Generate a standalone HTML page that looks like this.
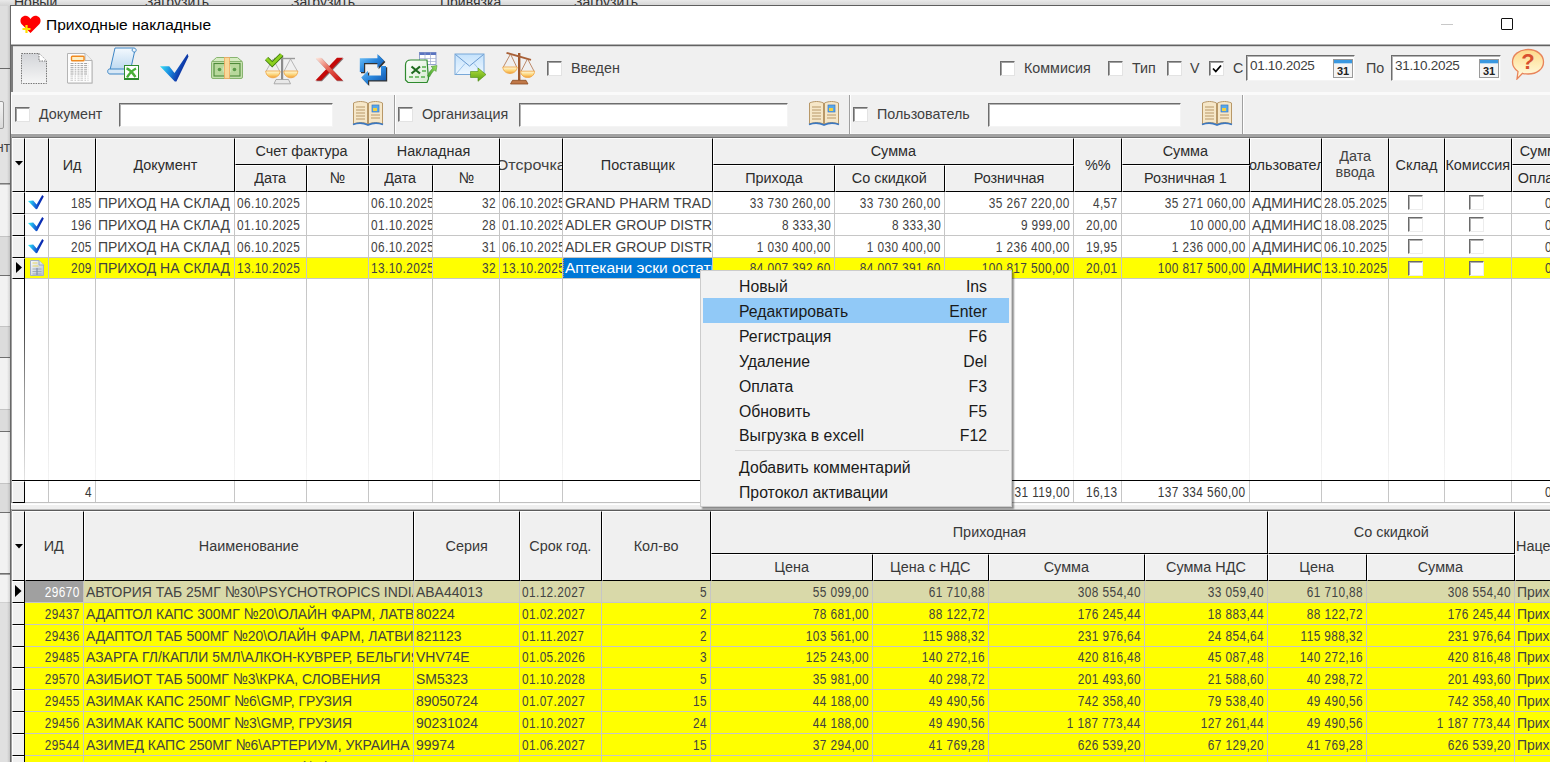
<!DOCTYPE html><html><head><meta charset="utf-8"><title>Приходные накладные</title><style>
html,body{margin:0;padding:0;width:1550px;height:762px;overflow:hidden;background:#e3e3e3;font-family:"Liberation Sans",sans-serif;position:relative}
.cell{position:absolute;overflow:hidden;white-space:nowrap;box-sizing:border-box;font-size:15.5px;color:#424242}
.cell span{display:inline-block;vertical-align:top}
.t.l{transform:scaleX(.9);transform-origin:0 50%}
.t.r{transform:scaleX(.9);transform-origin:100% 50%}
.t.c{transform:scaleX(.9);transform-origin:50% 50%}
.h.c{transform:scaleX(.93);transform-origin:50% 50%}
.h.l{transform:scaleX(.93);transform-origin:0 50%}
.hw.c{transform:scaleX(1.04);transform-origin:50% 50%}
.n.l{font-size:15.2px;letter-spacing:.5px;transform:scaleX(.78);transform-origin:0 50%}
.n.r{font-size:15.2px;letter-spacing:.5px;transform:scaleX(.78);transform-origin:100% 50%}
.n.c{font-size:15.2px;letter-spacing:.5px;transform:scaleX(.78);transform-origin:50% 50%}
.hb{position:absolute;box-sizing:border-box;background:#f0f0f0;border-top:1px solid #fff;border-left:1px solid #fff;border-right:1px solid #000;border-bottom:1px solid #000}
.ab{position:absolute}
.lbl{position:absolute;white-space:nowrap;font-size:14px;color:#404040;line-height:16px}
.cb{position:absolute;width:15px;height:15px;box-sizing:border-box;background:#fff;border-top:1px solid #6d6d6d;border-left:1px solid #6d6d6d;border-right:1px solid #e3e3e3;border-bottom:1px solid #e3e3e3;box-shadow:inset 1px 1px 0 #a0a0a0}
.gcb{position:absolute;width:15px;height:15px;box-sizing:border-box;background:#fff;border-top:1px solid #6a6a6a;border-left:1px solid #6a6a6a;border-right:1px solid #ececec;border-bottom:1px solid #ececec;box-shadow:inset 1px 1px 0 #b0b0b0}
.inp{position:absolute;box-sizing:border-box;background:#fff;border-top:1px solid #6d6d6d;border-left:1px solid #6d6d6d;border-right:1px solid #f4f4f4;border-bottom:1px solid #f4f4f4;box-shadow:inset 1px 1px 0 #b4b4b4}
.mi{position:absolute;left:38px;white-space:nowrap;font-size:15.8px;color:#1a1a1a;line-height:25px;height:25px}
.ms{position:absolute;right:24px;white-space:nowrap;font-size:15.8px;color:#1a1a1a;line-height:25px;height:25px;text-align:right}
</style></head><body>
<div style="position:absolute;left:0px;top:0px;width:1550px;height:6px;background:linear-gradient(#e9e9e9,#d3d3d3);overflow:hidden"><div class="lbl" style="left:14px;top:-6px;font-size:14px;color:#333">Новый</div><div class="lbl" style="left:145px;top:-6px;font-size:14px;color:#333">Загрузить</div><div class="lbl" style="left:291px;top:-6px;font-size:14px;color:#333">Загрузить</div><div class="lbl" style="left:440px;top:-6px;font-size:14px;color:#333">Привязка</div><div class="lbl" style="left:574px;top:-6px;font-size:14px;color:#333">Загрузить</div></div>
<div style="position:absolute;left:0px;top:6px;width:10px;height:63px;background:#dedede"></div>
<div style="position:absolute;left:0px;top:69px;width:10px;height:115px;background:#e2e2e2"></div>
<div style="position:absolute;left:0px;top:185px;width:10px;height:52px;background:#f2f2f2"></div>
<div style="position:absolute;left:0px;top:237px;width:10px;height:39px;background:#dcdcdc"></div>
<div style="position:absolute;left:0px;top:276px;width:10px;height:51px;background:#f2f2f2"></div>
<div style="position:absolute;left:0px;top:327px;width:10px;height:31px;background:#dcdcdc"></div>
<div style="position:absolute;left:0px;top:358px;width:10px;height:52px;background:#f2f2f2"></div>
<div style="position:absolute;left:0px;top:410px;width:10px;height:22px;background:#dcdcdc"></div>
<div style="position:absolute;left:0px;top:432px;width:10px;height:52px;background:#f2f2f2"></div>
<div style="position:absolute;left:0px;top:484px;width:10px;height:29px;background:#dcdcdc"></div>
<div style="position:absolute;left:0px;top:513px;width:10px;height:61px;background:#f2f2f2"></div>
<div style="position:absolute;left:0px;top:575px;width:10px;height:28px;background:#f2f2f2"></div>
<div style="position:absolute;left:0px;top:603px;width:10px;height:160px;background:#e0e0e0"></div>
<div style="position:absolute;left:0px;top:68px;width:10px;height:1px;background:#6a6a6a"></div>
<div style="position:absolute;left:0px;top:183px;width:10px;height:1px;background:#7a7a7a"></div>
<div style="position:absolute;left:0px;top:184px;width:10px;height:1px;background:#b0b0b0"></div>
<div style="position:absolute;left:0px;top:236px;width:10px;height:1px;background:#c4c4c4"></div>
<div style="position:absolute;left:0px;top:275px;width:10px;height:1px;background:#707070"></div>
<div style="position:absolute;left:0px;top:326px;width:10px;height:1px;background:#c4c4c4"></div>
<div style="position:absolute;left:0px;top:357px;width:10px;height:1px;background:#707070"></div>
<div style="position:absolute;left:0px;top:409px;width:10px;height:1px;background:#c4c4c4"></div>
<div style="position:absolute;left:0px;top:431px;width:10px;height:1px;background:#707070"></div>
<div style="position:absolute;left:0px;top:483px;width:10px;height:1px;background:#c4c4c4"></div>
<div style="position:absolute;left:0px;top:512px;width:10px;height:1px;background:#707070"></div>
<div style="position:absolute;left:0px;top:573px;width:10px;height:1px;background:#707070"></div>
<div style="position:absolute;left:0px;top:574px;width:10px;height:1px;background:#a0a0a0"></div>
<div style="position:absolute;left:0px;top:602px;width:10px;height:1px;background:#d0d0d0"></div>
<div style="position:absolute;left:7px;top:6px;width:3px;height:756px;background:linear-gradient(to right,rgba(0,0,0,0),rgba(0,0,0,.12))"></div>
<div style="position:absolute;left:-6px;top:101px;width:10px;height:28px;box-sizing:border-box;border:1px solid #9a9a9a;border-radius:2px;background:linear-gradient(#f4f4f4,#dadada)"></div>
<div class="lbl" style="left:-4px;top:139px;color:#444">нт</div>
<div style="position:absolute;left:10px;top:5px;width:1540px;height:757px;background:#fff;border-left:1px solid #686868;border-top:1px solid #5e5e5e;box-sizing:border-box"></div>
<div class="lbl" style="left:46px;top:16px;font-size:15.5px;color:#000;line-height:18px">Приходные накладные</div>
<div style="position:absolute;left:1441px;top:24px;width:12px;height:1px;background:#c8c8c8"></div>
<div style="position:absolute;left:1501px;top:18px;width:12px;height:12px;box-sizing:border-box;border:1px solid #111;border-radius:1px"></div>
<div style="position:absolute;left:11px;top:44px;width:1539px;height:1px;background:#b4b4b4"></div>
<div style="position:absolute;left:11px;top:45px;width:1539px;height:1px;background:#626262"></div>
<div style="position:absolute;left:11px;top:46px;width:1539px;height:46px;background:#f0f0f0"></div>
<div style="position:absolute;left:11px;top:46px;width:1539px;height:1px;background:#d2d2d2"></div>
<div style="position:absolute;left:11px;top:46px;width:2px;height:46px;background:#7c7c7c"></div>
<div style="position:absolute;left:11px;top:92px;width:1539px;height:3px;background:#fafafa"></div>
<div style="position:absolute;left:11px;top:95px;width:1539px;height:39px;background:#f0f0f0"></div>
<div style="position:absolute;left:11px;top:95px;width:1px;height:39px;background:#ffffff"></div>
<div style="position:absolute;left:11px;top:133px;width:1539px;height:1px;background:#f6f6f6"></div>
<div style="position:absolute;left:11px;top:134px;width:1539px;height:3px;background:#a2a2a2"></div>
<div style="position:absolute;left:11px;top:137px;width:1539px;height:1px;background:#737373"></div>
<svg style="position:absolute;left:20px;top:15px" width="21" height="19" viewBox="0 0 21 19"><path d="M10.5 18 L2 9.5 C-0.5 7 0 2.5 3.5 1.2 C6.5 0 9 1.5 10.5 4 C12 1.5 14.5 0 17.5 1.2 C21 2.5 21.5 7 19 9.5 Z" fill="#f00"/><path d="M6.5 10v8M2.5 14h8" stroke="#ffe000" stroke-width="2.2"/></svg>
<svg style="position:absolute;left:20px;top:52px" width="28" height="33" viewBox="0 0 28 33"><defs><linearGradient id="g1" x1="0" y1="0" x2="0" y2="1"><stop offset="0" stop-color="#d2d4d8"/><stop offset="1" stop-color="#f6f6f6"/></linearGradient></defs><path d="M1.5 1.5 H19 L26.5 9 V31.5 H1.5 Z" fill="url(#g1)" stroke="#777" stroke-dasharray="1.5 1" stroke-width="1"/><path d="M19 1.5 V9 H26.5" fill="#fff" stroke="#777" stroke-dasharray="1.5 1"/></svg>
<svg style="position:absolute;left:66px;top:52px" width="28" height="33" viewBox="0 0 28 33"><path d="M2 2.5 H20 L27 9.5 V32 H2 Z" fill="#c8c8c8" opacity=".6"/><path d="M1.5 1.5 H19 L26 8.5 V31 H1.5 Z" fill="#fcfcfc" stroke="#b4b4b4" stroke-width="1"/><path d="M19 1.5 V8.5 H26" fill="#f0f0f0" stroke="#b4b4b4"/><rect x="5.5" y="4.2" width="12.5" height="4.6" rx=".8" fill="#fdf0c8" stroke="#f08a20" stroke-width="1.4"/><g stroke="#9a9a9a" stroke-width=".9" stroke-dasharray="3 1.2 1.6 1.2 2 1 2.6 1"><path d="M4.5 11.5h18M4.5 13.6h18M4.5 15.7h18M4.5 17.8h18M4.5 19.9h18M4.5 22h18"/></g><g stroke="#c4c4c4" stroke-width=".9" stroke-dasharray="2.5 1.5 1.5 1.5 2 1"><path d="M4.5 24.1h18M4.5 26.2h18M4.5 28.3h18"/></g></svg>
<svg style="position:absolute;left:106px;top:47px" width="34" height="34" viewBox="0 0 34 34"><defs><linearGradient id="g3" x1="0" y1="0" x2="0" y2="1"><stop offset="0" stop-color="#f4f9fe"/><stop offset="1" stop-color="#bcd8f0"/></linearGradient></defs><path d="M9 1 H28 C30.5 1 31 5 28.5 5 L24.5 23 H4 Z" fill="url(#g3)" stroke="#3d86c6" stroke-width="1"/><path d="M27 1.5 C25.5 2.5 26 5 28.5 5" fill="none" stroke="#3d86c6" stroke-width="1"/><path d="M3.5 22 H23 C21.5 23.5 22 27 24 27 H4 C1 27 1 22 3.5 22Z" fill="#d8e8f6" stroke="#3d86c6" stroke-width="1"/><rect x="18.5" y="18.5" width="14" height="14" fill="#fff" stroke="#2e8a2e" stroke-width="1"/><path d="M20.5 21.5 C23 22 26 25 29.5 30 M30 21.5 C27 23 23 27 21 30.5" fill="none" stroke="#48b038" stroke-width="2.4"/><path d="M19 31.5h13" stroke="#2e8a2e" stroke-width="1"/></svg>
<svg style="position:absolute;left:158px;top:53px" width="32" height="30" viewBox="0 0 32 30"><defs><linearGradient id="g4" x1="0" y1=".3" x2="1" y2=".7"><stop offset="0" stop-color="#3ef0fa"/><stop offset=".4" stop-color="#1a8ee0"/><stop offset=".7" stop-color="#1040b0"/><stop offset="1" stop-color="#08207a"/></linearGradient></defs><path d="M2 13.3 L11.2 13.3 L16.5 20 L29.5 0.7 L30.5 3.6 L18.4 28.5 L16.8 28.5 Z" fill="url(#g4)"/></svg>
<svg style="position:absolute;left:210px;top:56px" width="34" height="24" viewBox="0 0 34 24"><rect x="1.5" y="5" width="31" height="17.5" rx="1.5" fill="#c4e0ac" stroke="#88b470" stroke-width="1"/><path d="M2 5.5 L6.5 1.5 H27.5 L32 5.5Z" fill="#d6ecc2" stroke="#88b470" stroke-width="1"/><rect x="4" y="7.5" width="26" height="12.5" fill="#b8d89c" stroke="#4e8a3a" stroke-width="1.1"/><circle cx="9.5" cy="13.5" r="1.8" fill="#5a9a48"/><circle cx="24.5" cy="13.5" r="1.8" fill="#5a9a48"/><ellipse cx="17" cy="13.5" rx="4.5" ry="4.5" fill="#cde6b6"/><rect x="14.5" y="1.5" width="5" height="21" fill="#f8d898" stroke="#f0a860" stroke-width=".8"/></svg>
<svg style="position:absolute;left:263px;top:51px" width="38" height="35" viewBox="263 51 38 35"><defs><linearGradient id="gp" x1="0" y1="0" x2="0" y2="1"><stop offset="0" stop-color="#fffbe0"/><stop offset=".55" stop-color="#fcd478"/><stop offset="1" stop-color="#f2a03a"/></linearGradient></defs><rect x="281" y="55" width="2.2" height="25" fill="#8c8c8c"/><path d="M274 58.5 H295" stroke="#9a9a9a" stroke-width="1.4"/><path d="M273 59 L266.2 71 M273 59 L279.6 71 M290.5 59 L284.2 71 M290.5 59 L297.3 71" stroke="#a8a8a8" stroke-width=".8"/><path d="M265.7 71 H280.1 C279.6 80 266.2 80 265.7 71Z" fill="url(#gp)" stroke="#f0a848" stroke-width=".9"/><path d="M283.8 71 H297.8 C297.3 80 284.3 80 283.8 71Z" fill="url(#gp)" stroke="#f0a848" stroke-width=".9"/><path d="M276 79.5 H288.5 L290.5 83.8 H274 Z" fill="#e8e8e8" stroke="#9c9c9c" stroke-width=".8"/><path d="M266.6 58.6 L272.2 64.2 L281.6 54.8" fill="none" stroke="#3e7a0e" stroke-width="4.6"/><path d="M266.6 58.6 L272.2 64.2 L281.6 54.8" fill="none" stroke="#8cd020" stroke-width="3"/></svg>
<svg style="position:absolute;left:312px;top:55px" width="34" height="28" viewBox="312 55 34 28"><defs><linearGradient id="g7" x1="0" y1="0" x2="1" y2="1"><stop offset="0" stop-color="#fff0e6"/><stop offset=".45" stop-color="#e86a5a"/><stop offset="1" stop-color="#c80a0a"/></linearGradient></defs><path d="M337.8 58.5 H343.8 L322 81.2 H316.2 Z" fill="#2a0a0a" opacity=".55"/><path d="M337 57.7 H343 L321.2 80.4 H315.4 Z" fill="#c40808"/><path d="M316 58.5 H322 L343.6 81.2 H337.4 Z" fill="#3a0a0a" opacity=".5"/><path d="M315.2 57.7 H321.2 L342.8 80.4 H336.6 Z" fill="url(#g7)"/></svg>
<svg style="position:absolute;left:357px;top:52px" width="32" height="35" viewBox="357 52 32 35"><defs><linearGradient id="g8" x1="0" y1="0" x2="1" y2="1"><stop offset="0" stop-color="#7cccfc"/><stop offset=".5" stop-color="#2a86dc"/><stop offset="1" stop-color="#0a4ca4"/></linearGradient></defs><g transform="translate(1.2,1.2)" fill="#111" opacity=".85"><path d="M359.8 72 V58.2 H377.4 V54.1 L384.2 60.8 L377.4 68.1 V63 H364 V72 Z"/><path d="M386 66 V80.3 H368 V84.8 L361.2 77.5 L368 70.8 V75.5 H381 V66 Z"/></g><path d="M359.8 72 V58.2 H377.4 V54.1 L384.2 60.8 L377.4 68.1 V63 H364 V72 Z" fill="url(#g8)"/><path d="M386 66 V80.3 H368 V84.8 L361.2 77.5 L368 70.8 V75.5 H381 V66 Z" fill="url(#g8)"/></svg>
<svg style="position:absolute;left:402px;top:50px" width="37" height="35" viewBox="402 50 37 35"><defs><linearGradient id="g9" x1="0" y1="0" x2="1" y2="1"><stop offset="0" stop-color="#ffffff"/><stop offset="1" stop-color="#d6ead0"/></linearGradient><linearGradient id="g9a" x1="0" y1="1" x2="1" y2="0"><stop offset="0" stop-color="#3a9a2a"/><stop offset="1" stop-color="#9ee060"/></linearGradient></defs><rect x="419.5" y="52.5" width="16.5" height="12" fill="#fff" stroke="#7a8cc0" stroke-width=".8"/><rect x="419.5" y="52.5" width="16.5" height="2.5" fill="#5a74c0"/><path d="M419.5 58.5h16.5M419.5 61.5h16.5M425 52.5v12M430.5 52.5v12" stroke="#a0acd0" stroke-width=".7"/><path d="M405.5 65 C405.5 61.5 408 60 411 60 H427 L428.5 79 L427 82.5 H408 L405.5 80 Z" fill="url(#g9)" stroke="#2e8a2e" stroke-width="1.2"/><path d="M411.5 66.5 L420 73.5 M420 66.5 L411.5 73.5" stroke="#1e6a1e" stroke-width="2.2"/><path d="M422 67h4M422 71h4M409 77h4M415 77h4M421 77h4" stroke="#78c070" stroke-width="2"/><path d="M427.5 76 C429 72 431 70 433 68 L431 66.5 L437 65.5 L436 71.5 L434.5 70 C432.5 72 431 74 429.5 77 Z" fill="url(#g9a)" stroke="#3a8a2a" stroke-width=".5"/></svg>
<svg style="position:absolute;left:453px;top:52px" width="35" height="31" viewBox="453 52 35 31"><defs><linearGradient id="g10" x1="0" y1="0" x2="0" y2="1"><stop offset="0" stop-color="#c4e2fc"/><stop offset="1" stop-color="#eef7ff"/></linearGradient><linearGradient id="g10a" x1="0" y1="0" x2="0" y2="1"><stop offset="0" stop-color="#b4e040"/><stop offset="1" stop-color="#5aa010"/></linearGradient></defs><rect x="455" y="54" width="29" height="20.5" fill="url(#g10)" stroke="#78a8d8" stroke-width="1"/><path d="M455.5 54.5 L469.5 66 L483.5 54.5" fill="none" stroke="#6a9ad0" stroke-width="1"/><path d="M456 74 L465 63.5 M483 74 L474 63.5" stroke="#8ab8e4" stroke-width=".8"/><path d="M470.5 71.5 H478 V68 L486 74.5 L478 81.3 V77.5 H470.5 Z" fill="url(#g10a)" stroke="#4a8a10" stroke-width=".6"/></svg>
<svg style="position:absolute;left:501px;top:51px" width="36" height="35" viewBox="501 51 36 35"><defs><linearGradient id="gq" x1="0" y1="0" x2="0" y2="1"><stop offset="0" stop-color="#fffbe0"/><stop offset=".55" stop-color="#fcd478"/><stop offset="1" stop-color="#f2a03a"/></linearGradient></defs><rect x="518" y="53" width="2.4" height="27.5" fill="#a05a30"/><path d="M506.5 52.8 L531 59.8" stroke="#a86038" stroke-width="1.8"/><path d="M510.5 54 L503.2 67.2 M510.5 54 L516.8 67.2 M527.5 58.8 L521 71.4 M527.5 58.8 L534.2 71.4" stroke="#b07048" stroke-width=".8"/><path d="M502.8 67 H517.2 C516.7 75.6 503.3 75.6 502.8 67Z" fill="url(#gq)" stroke="#f0a848" stroke-width=".9"/><path d="M520.6 71.2 H534.6 C534.1 79.6 521.1 79.6 520.6 71.2Z" fill="url(#gq)" stroke="#f0a848" stroke-width=".9"/><path d="M512.5 80.3 H526 L528 84 H510.5 Z" fill="#c07848" stroke="#8a4a20" stroke-width=".8"/></svg>
<div class="cb" style="left:547px;top:61px"></div>
<div class="lbl" style="left:571px;top:60px;font-size:14.3px">Введен</div>
<div class="cb" style="left:1000px;top:61px"></div>
<div class="lbl" style="left:1024px;top:60px;font-size:14.3px">Коммисия</div>
<div class="cb" style="left:1108px;top:61px"></div>
<div class="lbl" style="left:1132px;top:60px;font-size:14.3px">Тип</div>
<div class="cb" style="left:1167px;top:61px"></div>
<div class="lbl" style="left:1190px;top:60px;font-size:14.3px">V</div>
<div class="cb" style="left:1209px;top:61px"></div>
<svg style="position:absolute;left:1212px;top:64px" width="10" height="9" viewBox="0 0 10 9"><path d="M1 4.5 L3.8 7.5 L9 1.5" fill="none" stroke="#000" stroke-width="1.8"/></svg>
<div class="lbl" style="left:1233px;top:60px;font-size:14.3px">С</div>
<div class="inp" style="left:1246px;top:55px;width:109px;height:26px"></div><div class="lbl" style="left:1250px;top:58px;font-size:13.5px;letter-spacing:-0.3px">01.10.2025</div><svg style="position:absolute;left:1333px;top:59px" width="20" height="19" viewBox="0 0 20 19"><rect x="0.5" y="0.5" width="19" height="18" fill="#f4f4f4" stroke="#9a9a9a"/><rect x="1" y="1" width="18" height="3" fill="#3a98e0"/><rect x="1" y="4" width="18" height="1" fill="#b8d8f0"/><text x="10" y="16" font-family="Liberation Sans" font-weight="bold" font-size="11" text-anchor="middle" fill="#222">31</text></svg>
<div class="lbl" style="left:1366px;top:60px;font-size:14.3px">По</div>
<div class="inp" style="left:1391px;top:55px;width:110px;height:26px"></div><div class="lbl" style="left:1395px;top:58px;font-size:13.5px;letter-spacing:-0.3px">31.10.2025</div><svg style="position:absolute;left:1479px;top:59px" width="20" height="19" viewBox="0 0 20 19"><rect x="0.5" y="0.5" width="19" height="18" fill="#f4f4f4" stroke="#9a9a9a"/><rect x="1" y="1" width="18" height="3" fill="#3a98e0"/><rect x="1" y="4" width="18" height="1" fill="#b8d8f0"/><text x="10" y="16" font-family="Liberation Sans" font-weight="bold" font-size="11" text-anchor="middle" fill="#222">31</text></svg>
<svg style="position:absolute;left:1511px;top:48px" width="34" height="32" viewBox="0 0 34 32"><defs><linearGradient id="gh" x1="0" y1="0" x2="0" y2="1"><stop offset="0" stop-color="#fdd888"/><stop offset=".6" stop-color="#fff0c0"/><stop offset="1" stop-color="#fffbe8"/></linearGradient></defs><path d="M17 1.5 C26 1.5 32.5 7 32.5 14 C32.5 21 26 26 17 26 C15 26 13 25.8 11.5 25.3 L6 31 L7 23.5 C3.5 21 1.5 17.8 1.5 14 C1.5 7 8 1.5 17 1.5Z" fill="url(#gh)" stroke="#e8845a" stroke-width="1.3"/><text x="17" y="21" font-family="Liberation Sans" font-weight="bold" font-size="22" text-anchor="middle" fill="#d8502e">?</text></svg>
<div class="cb" style="left:15px;top:107px"></div>
<div class="lbl" style="left:39px;top:106px;font-size:14.3px">Документ</div>
<div class="inp" style="left:119px;top:103px;width:214px;height:24px"></div>
<svg style="position:absolute;left:352px;top:99px" width="32" height="27" viewBox="0 0 32 27"><path d="M1.5 4 C6 2 11 2 15.5 4 V25 C11 23 6 23 1.5 25 Z" fill="#f6e7c8" stroke="#b89868" stroke-width="1"/><path d="M16.5 4 C21 2 26 2 30.5 4 V25 C26 23 21 23 16.5 25 Z" fill="#f6e7c8" stroke="#b89868" stroke-width="1"/><path d="M1 25.5 C6 23.5 11 23.5 16 26 C21 23.5 26 23.5 31 25.5" fill="none" stroke="#3c78c0" stroke-width="1.8"/><path d="M4 8h9M4 11h9M4 14h9M4 17h9M4 20h9M19 16h9M19 19h9" stroke="#b89868" stroke-width="1"/><rect x="20" y="6" width="7" height="7" fill="#58a8e8" stroke="#3c78c0" stroke-width=".7"/><rect x="21" y="9" width="4" height="3" fill="#f0d040"/></svg>
<div class="cb" style="left:398px;top:107px"></div>
<div class="lbl" style="left:422px;top:106px;font-size:14.3px">Организация</div>
<div class="inp" style="left:519px;top:103px;width:269px;height:24px"></div>
<svg style="position:absolute;left:808px;top:99px" width="32" height="27" viewBox="0 0 32 27"><path d="M1.5 4 C6 2 11 2 15.5 4 V25 C11 23 6 23 1.5 25 Z" fill="#f6e7c8" stroke="#b89868" stroke-width="1"/><path d="M16.5 4 C21 2 26 2 30.5 4 V25 C26 23 21 23 16.5 25 Z" fill="#f6e7c8" stroke="#b89868" stroke-width="1"/><path d="M1 25.5 C6 23.5 11 23.5 16 26 C21 23.5 26 23.5 31 25.5" fill="none" stroke="#3c78c0" stroke-width="1.8"/><path d="M4 8h9M4 11h9M4 14h9M4 17h9M4 20h9M19 16h9M19 19h9" stroke="#b89868" stroke-width="1"/><rect x="20" y="6" width="7" height="7" fill="#58a8e8" stroke="#3c78c0" stroke-width=".7"/><rect x="21" y="9" width="4" height="3" fill="#f0d040"/></svg>
<div class="cb" style="left:853px;top:107px"></div>
<div class="lbl" style="left:877px;top:106px;font-size:14.3px">Пользователь</div>
<div class="inp" style="left:988px;top:103px;width:193px;height:24px"></div>
<svg style="position:absolute;left:1201px;top:99px" width="32" height="27" viewBox="0 0 32 27"><path d="M1.5 4 C6 2 11 2 15.5 4 V25 C11 23 6 23 1.5 25 Z" fill="#f6e7c8" stroke="#b89868" stroke-width="1"/><path d="M16.5 4 C21 2 26 2 30.5 4 V25 C26 23 21 23 16.5 25 Z" fill="#f6e7c8" stroke="#b89868" stroke-width="1"/><path d="M1 25.5 C6 23.5 11 23.5 16 26 C21 23.5 26 23.5 31 25.5" fill="none" stroke="#3c78c0" stroke-width="1.8"/><path d="M4 8h9M4 11h9M4 14h9M4 17h9M4 20h9M19 16h9M19 19h9" stroke="#b89868" stroke-width="1"/><rect x="20" y="6" width="7" height="7" fill="#58a8e8" stroke="#3c78c0" stroke-width=".7"/><rect x="21" y="9" width="4" height="3" fill="#f0d040"/></svg>
<div style="position:absolute;left:394px;top:95px;width:1px;height:39px;background:#a0a0a0"></div>
<div style="position:absolute;left:395px;top:95px;width:1px;height:39px;background:#ffffff"></div>
<div style="position:absolute;left:849px;top:95px;width:1px;height:39px;background:#a0a0a0"></div>
<div style="position:absolute;left:850px;top:95px;width:1px;height:39px;background:#ffffff"></div>
<div style="position:absolute;left:1242px;top:95px;width:1px;height:39px;background:#a0a0a0"></div>
<div style="position:absolute;left:1243px;top:95px;width:1px;height:39px;background:#ffffff"></div>
<div style="position:absolute;left:12px;top:192px;width:1538px;height:310px;background:#fff"></div>
<div style="position:absolute;left:11px;top:136px;width:1px;height:367px;background:#a0a0a0"></div>
<div class="hb" style="left:12px;top:138px;width:13px;height:54px"></div>
<div class="hb" style="left:25px;top:138px;width:24px;height:54px"></div>
<div class="hb" style="left:49px;top:138px;width:47px;height:54px"></div><div class="cell" style="left:49px;top:138px;width:46px;height:53px;line-height:53px;display:flex;justify-content:center;color:#2c2c2c"><span class="h c">Ид</span></div>
<div class="hb" style="left:96px;top:138px;width:139px;height:54px"></div><div class="cell" style="left:96px;top:138px;width:138px;height:53px;line-height:53px;display:flex;justify-content:center;color:#2c2c2c"><span class="h c">Документ</span></div>
<div class="hb" style="left:235px;top:138px;width:134px;height:27px"></div><div class="cell" style="left:235px;top:138px;width:133px;height:26px;line-height:26px;display:flex;justify-content:center;color:#2c2c2c"><span class="h c">Счет фактура</span></div>
<div class="hb" style="left:235px;top:165px;width:72px;height:27px"></div><div class="cell" style="left:235px;top:165px;width:71px;height:26px;line-height:26px;display:flex;justify-content:center;color:#2c2c2c"><span class="h c">Дата</span></div>
<div class="hb" style="left:307px;top:165px;width:62px;height:27px"></div><div class="cell" style="left:307px;top:165px;width:61px;height:26px;line-height:26px;display:flex;justify-content:center;color:#2c2c2c"><span class="h c">№</span></div>
<div class="hb" style="left:369px;top:138px;width:131px;height:27px"></div><div class="cell" style="left:369px;top:138px;width:130px;height:26px;line-height:26px;display:flex;justify-content:center;color:#2c2c2c"><span class="h c">Накладная</span></div>
<div class="hb" style="left:369px;top:165px;width:64px;height:27px"></div><div class="cell" style="left:369px;top:165px;width:63px;height:26px;line-height:26px;display:flex;justify-content:center;color:#2c2c2c"><span class="h c">Дата</span></div>
<div class="hb" style="left:433px;top:165px;width:67px;height:27px"></div><div class="cell" style="left:433px;top:165px;width:66px;height:26px;line-height:26px;display:flex;justify-content:center;color:#2c2c2c"><span class="h c">№</span></div>
<div class="hb" style="left:500px;top:138px;width:63px;height:54px"></div><div class="cell" style="left:500px;top:138px;width:62px;height:53px;line-height:53px;display:flex;justify-content:center;"><span class="hw c">Отсрочка</span></div>
<div class="hb" style="left:563px;top:138px;width:150px;height:54px"></div><div class="cell" style="left:563px;top:138px;width:149px;height:53px;line-height:53px;display:flex;justify-content:center;color:#2c2c2c"><span class="h c">Поставщик</span></div>
<div class="hb" style="left:713px;top:138px;width:361px;height:27px"></div><div class="cell" style="left:713px;top:138px;width:360px;height:26px;line-height:26px;display:flex;justify-content:center;color:#2c2c2c"><span class="h c">Сумма</span></div>
<div class="hb" style="left:713px;top:165px;width:122px;height:27px"></div><div class="cell" style="left:713px;top:165px;width:121px;height:26px;line-height:26px;display:flex;justify-content:center;color:#2c2c2c"><span class="h c">Прихода</span></div>
<div class="hb" style="left:835px;top:165px;width:110px;height:27px"></div><div class="cell" style="left:835px;top:165px;width:109px;height:26px;line-height:26px;display:flex;justify-content:center;color:#2c2c2c"><span class="h c">Со скидкой</span></div>
<div class="hb" style="left:945px;top:165px;width:129px;height:27px"></div><div class="cell" style="left:945px;top:165px;width:128px;height:26px;line-height:26px;display:flex;justify-content:center;color:#2c2c2c"><span class="h c">Розничная</span></div>
<div class="hb" style="left:1074px;top:138px;width:48px;height:54px"></div><div class="cell" style="left:1074px;top:138px;width:47px;height:53px;line-height:53px;display:flex;justify-content:center;color:#2c2c2c"><span class="h c">%%</span></div>
<div class="hb" style="left:1122px;top:138px;width:128px;height:27px"></div><div class="cell" style="left:1122px;top:138px;width:127px;height:26px;line-height:26px;display:flex;justify-content:center;color:#2c2c2c"><span class="h c">Сумма</span></div>
<div class="hb" style="left:1122px;top:165px;width:128px;height:27px"></div><div class="cell" style="left:1122px;top:165px;width:127px;height:26px;line-height:26px;display:flex;justify-content:center;color:#2c2c2c"><span class="h c">Розничная 1</span></div>
<div class="hb" style="left:1250px;top:138px;width:72px;height:54px"></div><div class="cell" style="left:1250px;top:138px;width:71px;height:53px;line-height:53px;display:flex;justify-content:center;color:#2c2c2c"><span class="h c">Пользователь</span></div>
<div class="hb" style="left:1322px;top:138px;width:67px;height:54px"></div>
<div class="cell" style="left:1322px;top:147px;width:66px;height:17px;line-height:17px;display:flex;justify-content:center;"><span class="h c">Дата</span></div>
<div class="cell" style="left:1322px;top:163px;width:66px;height:17px;line-height:17px;display:flex;justify-content:center;"><span class="h c">ввода</span></div>
<div class="hb" style="left:1389px;top:138px;width:56px;height:54px"></div><div class="cell" style="left:1389px;top:138px;width:55px;height:53px;line-height:53px;display:flex;justify-content:center;color:#2c2c2c"><span class="h c">Склад</span></div>
<div class="hb" style="left:1445px;top:138px;width:67px;height:54px"></div><div class="cell" style="left:1445px;top:138px;width:66px;height:53px;line-height:53px;display:flex;justify-content:center;color:#2c2c2c"><span class="h c">Комиссия</span></div>
<div class="hb" style="left:1512px;top:138px;width:62px;height:27px"></div><div class="cell" style="left:1512px;top:138px;width:61px;height:26px;line-height:26px;display:flex;justify-content:center;color:#2c2c2c"><span class="h c">Сумма</span></div>
<div class="hb" style="left:1512px;top:165px;width:62px;height:27px"></div><div class="cell" style="left:1512px;top:165px;width:61px;height:26px;line-height:26px;display:flex;justify-content:center;color:#2c2c2c"><span class="h c">Оплата</span></div>
<svg style="position:absolute;left:15px;top:161px" width="8" height="5" viewBox="0 0 8 5"><path d="M0 0 H8 L4 4.5Z" fill="#000"/></svg>
<div style="position:absolute;left:25px;top:192px;width:1525px;height:21px;background:#ffffff"></div>
<div class="hb" style="left:12px;top:192px;width:13px;height:22px"></div>
<svg style="position:absolute;left:28px;top:195px" width="16" height="16" viewBox="0 0 16 16"><defs><linearGradient id="gc" x1="0" y1=".4" x2="1" y2=".6"><stop offset="0" stop-color="#2ef4fa"/><stop offset=".45" stop-color="#1a7ee0"/><stop offset=".75" stop-color="#0a30b8"/><stop offset="1" stop-color="#08189a"/></linearGradient></defs><path d="M0 6 L5.2 5.6 L8.6 9.6 L14.2 0 L15.8 1.6 L9.2 14 L8 14.2 Z" fill="url(#gc)"/></svg>
<div class="cell" style="left:49px;top:192px;width:46px;height:21px;line-height:21px;text-align:right;padding-right:3px;"><span class="n r">185</span></div>
<div class="cell" style="left:96px;top:192px;width:138px;height:21px;line-height:21px;text-align:left;padding-left:2px;"><span class="t l">ПРИХОД НА СКЛАД</span></div>
<div class="cell" style="left:235px;top:192px;width:71px;height:21px;line-height:21px;text-align:left;padding-left:2px;"><span class="n l">06.10.2025</span></div>
<div class="cell" style="left:369px;top:192px;width:63px;height:21px;line-height:21px;text-align:left;padding-left:2px;"><span class="n l">06.10.2025</span></div>
<div class="cell" style="left:433px;top:192px;width:66px;height:21px;line-height:21px;text-align:right;padding-right:3px;"><span class="n r">32</span></div>
<div class="cell" style="left:500px;top:192px;width:62px;height:21px;line-height:21px;text-align:left;padding-left:2px;"><span class="n l">06.10.2025</span></div>
<div class="cell" style="left:563px;top:192px;width:149px;height:21px;line-height:21px;text-align:left;padding-left:2px;"><span class="t l">GRAND PHARM TRADE</span></div>
<div class="cell" style="left:713px;top:192px;width:121px;height:21px;line-height:21px;text-align:right;padding-right:3px;"><span class="n r">33 730 260,00</span></div>
<div class="cell" style="left:835px;top:192px;width:109px;height:21px;line-height:21px;text-align:right;padding-right:3px;"><span class="n r">33 730 260,00</span></div>
<div class="cell" style="left:945px;top:192px;width:128px;height:21px;line-height:21px;text-align:right;padding-right:3px;"><span class="n r">35 267 220,00</span></div>
<div class="cell" style="left:1074px;top:192px;width:47px;height:21px;line-height:21px;text-align:right;padding-right:3px;"><span class="n r">4,57</span></div>
<div class="cell" style="left:1122px;top:192px;width:127px;height:21px;line-height:21px;text-align:right;padding-right:3px;"><span class="n r">35 271 060,00</span></div>
<div class="cell" style="left:1250px;top:192px;width:71px;height:21px;line-height:21px;text-align:left;padding-left:2px;"><span class="t l">АДМИНИСТРАТОР</span></div>
<div class="cell" style="left:1322px;top:192px;width:66px;height:21px;line-height:21px;text-align:left;padding-left:2px;"><span class="n l">28.05.2025</span></div>
<div class="gcb" style="left:1408px;top:195px;width:15px;height:15px"></div>
<div class="gcb" style="left:1469px;top:195px;width:15px;height:15px"></div>
<div class="cell" style="left:1512px;top:192px;width:61px;height:21px;line-height:21px;text-align:right;padding-right:3px;"><span class="n r">0,00</span></div>
<div style="position:absolute;left:25px;top:214px;width:1525px;height:21px;background:#ffffff"></div>
<div class="hb" style="left:12px;top:214px;width:13px;height:22px"></div>
<svg style="position:absolute;left:28px;top:217px" width="16" height="16" viewBox="0 0 16 16"><defs><linearGradient id="gc" x1="0" y1=".4" x2="1" y2=".6"><stop offset="0" stop-color="#2ef4fa"/><stop offset=".45" stop-color="#1a7ee0"/><stop offset=".75" stop-color="#0a30b8"/><stop offset="1" stop-color="#08189a"/></linearGradient></defs><path d="M0 6 L5.2 5.6 L8.6 9.6 L14.2 0 L15.8 1.6 L9.2 14 L8 14.2 Z" fill="url(#gc)"/></svg>
<div class="cell" style="left:49px;top:214px;width:46px;height:21px;line-height:21px;text-align:right;padding-right:3px;"><span class="n r">196</span></div>
<div class="cell" style="left:96px;top:214px;width:138px;height:21px;line-height:21px;text-align:left;padding-left:2px;"><span class="t l">ПРИХОД НА СКЛАД</span></div>
<div class="cell" style="left:235px;top:214px;width:71px;height:21px;line-height:21px;text-align:left;padding-left:2px;"><span class="n l">01.10.2025</span></div>
<div class="cell" style="left:369px;top:214px;width:63px;height:21px;line-height:21px;text-align:left;padding-left:2px;"><span class="n l">01.10.2025</span></div>
<div class="cell" style="left:433px;top:214px;width:66px;height:21px;line-height:21px;text-align:right;padding-right:3px;"><span class="n r">28</span></div>
<div class="cell" style="left:500px;top:214px;width:62px;height:21px;line-height:21px;text-align:left;padding-left:2px;"><span class="n l">01.10.2025</span></div>
<div class="cell" style="left:563px;top:214px;width:149px;height:21px;line-height:21px;text-align:left;padding-left:2px;"><span class="t l">ADLER GROUP DISTRIBUTION</span></div>
<div class="cell" style="left:713px;top:214px;width:121px;height:21px;line-height:21px;text-align:right;padding-right:3px;"><span class="n r">8 333,30</span></div>
<div class="cell" style="left:835px;top:214px;width:109px;height:21px;line-height:21px;text-align:right;padding-right:3px;"><span class="n r">8 333,30</span></div>
<div class="cell" style="left:945px;top:214px;width:128px;height:21px;line-height:21px;text-align:right;padding-right:3px;"><span class="n r">9 999,00</span></div>
<div class="cell" style="left:1074px;top:214px;width:47px;height:21px;line-height:21px;text-align:right;padding-right:3px;"><span class="n r">20,00</span></div>
<div class="cell" style="left:1122px;top:214px;width:127px;height:21px;line-height:21px;text-align:right;padding-right:3px;"><span class="n r">10 000,00</span></div>
<div class="cell" style="left:1250px;top:214px;width:71px;height:21px;line-height:21px;text-align:left;padding-left:2px;"><span class="t l">АДМИНИСТРАТОР</span></div>
<div class="cell" style="left:1322px;top:214px;width:66px;height:21px;line-height:21px;text-align:left;padding-left:2px;"><span class="n l">18.08.2025</span></div>
<div class="gcb" style="left:1408px;top:217px;width:15px;height:15px"></div>
<div class="gcb" style="left:1469px;top:217px;width:15px;height:15px"></div>
<div class="cell" style="left:1512px;top:214px;width:61px;height:21px;line-height:21px;text-align:right;padding-right:3px;"><span class="n r">0,00</span></div>
<div style="position:absolute;left:25px;top:236px;width:1525px;height:21px;background:#ffffff"></div>
<div class="hb" style="left:12px;top:236px;width:13px;height:22px"></div>
<svg style="position:absolute;left:28px;top:239px" width="16" height="16" viewBox="0 0 16 16"><defs><linearGradient id="gc" x1="0" y1=".4" x2="1" y2=".6"><stop offset="0" stop-color="#2ef4fa"/><stop offset=".45" stop-color="#1a7ee0"/><stop offset=".75" stop-color="#0a30b8"/><stop offset="1" stop-color="#08189a"/></linearGradient></defs><path d="M0 6 L5.2 5.6 L8.6 9.6 L14.2 0 L15.8 1.6 L9.2 14 L8 14.2 Z" fill="url(#gc)"/></svg>
<div class="cell" style="left:49px;top:236px;width:46px;height:21px;line-height:21px;text-align:right;padding-right:3px;"><span class="n r">205</span></div>
<div class="cell" style="left:96px;top:236px;width:138px;height:21px;line-height:21px;text-align:left;padding-left:2px;"><span class="t l">ПРИХОД НА СКЛАД</span></div>
<div class="cell" style="left:235px;top:236px;width:71px;height:21px;line-height:21px;text-align:left;padding-left:2px;"><span class="n l">06.10.2025</span></div>
<div class="cell" style="left:369px;top:236px;width:63px;height:21px;line-height:21px;text-align:left;padding-left:2px;"><span class="n l">06.10.2025</span></div>
<div class="cell" style="left:433px;top:236px;width:66px;height:21px;line-height:21px;text-align:right;padding-right:3px;"><span class="n r">31</span></div>
<div class="cell" style="left:500px;top:236px;width:62px;height:21px;line-height:21px;text-align:left;padding-left:2px;"><span class="n l">06.10.2025</span></div>
<div class="cell" style="left:563px;top:236px;width:149px;height:21px;line-height:21px;text-align:left;padding-left:2px;"><span class="t l">ADLER GROUP DISTRIBUTION</span></div>
<div class="cell" style="left:713px;top:236px;width:121px;height:21px;line-height:21px;text-align:right;padding-right:3px;"><span class="n r">1 030 400,00</span></div>
<div class="cell" style="left:835px;top:236px;width:109px;height:21px;line-height:21px;text-align:right;padding-right:3px;"><span class="n r">1 030 400,00</span></div>
<div class="cell" style="left:945px;top:236px;width:128px;height:21px;line-height:21px;text-align:right;padding-right:3px;"><span class="n r">1 236 400,00</span></div>
<div class="cell" style="left:1074px;top:236px;width:47px;height:21px;line-height:21px;text-align:right;padding-right:3px;"><span class="n r">19,95</span></div>
<div class="cell" style="left:1122px;top:236px;width:127px;height:21px;line-height:21px;text-align:right;padding-right:3px;"><span class="n r">1 236 000,00</span></div>
<div class="cell" style="left:1250px;top:236px;width:71px;height:21px;line-height:21px;text-align:left;padding-left:2px;"><span class="t l">АДМИНИСТРАТОР</span></div>
<div class="cell" style="left:1322px;top:236px;width:66px;height:21px;line-height:21px;text-align:left;padding-left:2px;"><span class="n l">06.10.2025</span></div>
<div class="gcb" style="left:1408px;top:239px;width:15px;height:15px"></div>
<div class="gcb" style="left:1469px;top:239px;width:15px;height:15px"></div>
<div class="cell" style="left:1512px;top:236px;width:61px;height:21px;line-height:21px;text-align:right;padding-right:3px;"><span class="n r">0,00</span></div>
<div style="position:absolute;left:25px;top:258px;width:1525px;height:20px;background:#ffff00"></div>
<div class="hb" style="left:12px;top:258px;width:13px;height:21px"></div>
<svg style="position:absolute;left:30px;top:260px" width="14" height="16" viewBox="0 0 14 16"><defs><linearGradient id="gd" x1="0" y1="0" x2="1" y2="1"><stop offset="0" stop-color="#f8fafc"/><stop offset="1" stop-color="#b4c0d0"/></linearGradient></defs><path d="M0.5 0.5 H9 L13.5 5 V15.5 H0.5 Z" fill="url(#gd)" stroke="#a4b0c4" stroke-width="1"/><path d="M9 0.5 V5 H13.5" fill="#d8e0ec" stroke="#8c9cb8" stroke-width=".8"/><path d="M2.5 3h5M2.5 6h6" stroke="#e8d860" stroke-width="1"/><path d="M2.5 9h9M2.5 11.5h9M2.5 14h9" stroke="#9aa6b8" stroke-width=".9"/><path d="M7 8v7" stroke="#8090a8" stroke-width="1.2"/></svg>
<div class="cell" style="left:49px;top:258px;width:46px;height:20px;line-height:20px;text-align:right;padding-right:3px;"><span class="n r">209</span></div>
<div class="cell" style="left:96px;top:258px;width:138px;height:20px;line-height:20px;text-align:left;padding-left:2px;"><span class="t l">ПРИХОД НА СКЛАД</span></div>
<div class="cell" style="left:235px;top:258px;width:71px;height:20px;line-height:20px;text-align:left;padding-left:2px;"><span class="n l">13.10.2025</span></div>
<div class="cell" style="left:369px;top:258px;width:63px;height:20px;line-height:20px;text-align:left;padding-left:2px;"><span class="n l">13.10.2025</span></div>
<div class="cell" style="left:433px;top:258px;width:66px;height:20px;line-height:20px;text-align:right;padding-right:3px;"><span class="n r">32</span></div>
<div class="cell" style="left:500px;top:258px;width:62px;height:20px;line-height:20px;text-align:left;padding-left:2px;"><span class="n l">13.10.2025</span></div>
<div style="position:absolute;left:563px;top:257px;width:150px;height:22px;background:#0078d7;box-sizing:border-box;border:1px dotted #e08850"></div>
<div class="cell" style="left:563px;top:258px;width:149px;height:20px;line-height:20px;text-align:left;padding-left:2px;color:#fff;font-size:15.5px"><span class="w l">Аптекани эски остатки</span></div>
<div class="cell" style="left:713px;top:258px;width:121px;height:20px;line-height:20px;text-align:right;padding-right:3px;"><span class="n r">84 007 392,60</span></div>
<div class="cell" style="left:835px;top:258px;width:109px;height:20px;line-height:20px;text-align:right;padding-right:3px;"><span class="n r">84 007 391,60</span></div>
<div class="cell" style="left:945px;top:258px;width:128px;height:20px;line-height:20px;text-align:right;padding-right:3px;"><span class="n r">100 817 500,00</span></div>
<div class="cell" style="left:1074px;top:258px;width:47px;height:20px;line-height:20px;text-align:right;padding-right:3px;"><span class="n r">20,01</span></div>
<div class="cell" style="left:1122px;top:258px;width:127px;height:20px;line-height:20px;text-align:right;padding-right:3px;"><span class="n r">100 817 500,00</span></div>
<div class="cell" style="left:1250px;top:258px;width:71px;height:20px;line-height:20px;text-align:left;padding-left:2px;"><span class="t l">АДМИНИСТРАТОР</span></div>
<div class="cell" style="left:1322px;top:258px;width:66px;height:20px;line-height:20px;text-align:left;padding-left:2px;"><span class="n l">13.10.2025</span></div>
<div class="gcb" style="left:1408px;top:261px;width:15px;height:15px"></div>
<div class="gcb" style="left:1469px;top:261px;width:15px;height:15px"></div>
<div class="cell" style="left:1512px;top:258px;width:61px;height:20px;line-height:20px;text-align:right;padding-right:3px;"><span class="n r">0,00</span></div>
<svg style="position:absolute;left:16px;top:262px" width="7" height="12" viewBox="0 0 7 12"><path d="M0 0 L6 5.5 L0 11Z" fill="#000"/></svg>
<div style="position:absolute;left:25px;top:213px;width:1525px;height:1px;background:#c6c6c6"></div>
<div style="position:absolute;left:25px;top:235px;width:1525px;height:1px;background:#c6c6c6"></div>
<div style="position:absolute;left:25px;top:257px;width:1525px;height:1px;background:#c6c6c6"></div>
<div style="position:absolute;left:25px;top:278px;width:1525px;height:1px;background:#c6c6c6"></div>
<div style="position:absolute;left:48px;top:192px;width:1px;height:87px;background:#c6c6c6"></div>
<div style="position:absolute;left:95px;top:192px;width:1px;height:87px;background:#c6c6c6"></div>
<div style="position:absolute;left:234px;top:192px;width:1px;height:87px;background:#c6c6c6"></div>
<div style="position:absolute;left:306px;top:192px;width:1px;height:87px;background:#c6c6c6"></div>
<div style="position:absolute;left:368px;top:192px;width:1px;height:87px;background:#c6c6c6"></div>
<div style="position:absolute;left:432px;top:192px;width:1px;height:87px;background:#c6c6c6"></div>
<div style="position:absolute;left:499px;top:192px;width:1px;height:87px;background:#c6c6c6"></div>
<div style="position:absolute;left:562px;top:192px;width:1px;height:87px;background:#c6c6c6"></div>
<div style="position:absolute;left:712px;top:192px;width:1px;height:87px;background:#c6c6c6"></div>
<div style="position:absolute;left:834px;top:192px;width:1px;height:87px;background:#c6c6c6"></div>
<div style="position:absolute;left:944px;top:192px;width:1px;height:87px;background:#c6c6c6"></div>
<div style="position:absolute;left:1073px;top:192px;width:1px;height:87px;background:#c6c6c6"></div>
<div style="position:absolute;left:1121px;top:192px;width:1px;height:87px;background:#c6c6c6"></div>
<div style="position:absolute;left:1249px;top:192px;width:1px;height:87px;background:#c6c6c6"></div>
<div style="position:absolute;left:1321px;top:192px;width:1px;height:87px;background:#c6c6c6"></div>
<div style="position:absolute;left:1388px;top:192px;width:1px;height:87px;background:#c6c6c6"></div>
<div style="position:absolute;left:1444px;top:192px;width:1px;height:87px;background:#c6c6c6"></div>
<div style="position:absolute;left:1511px;top:192px;width:1px;height:87px;background:#c6c6c6"></div>
<div class="ab" style="left:48px;top:279px;width:1px;height:201px;background:linear-gradient(#c4c4c4,#dedede 55%,#f4f4f4)"></div>
<div class="ab" style="left:95px;top:279px;width:1px;height:201px;background:linear-gradient(#c4c4c4,#dedede 55%,#f4f4f4)"></div>
<div class="ab" style="left:234px;top:279px;width:1px;height:201px;background:linear-gradient(#c4c4c4,#dedede 55%,#f4f4f4)"></div>
<div class="ab" style="left:306px;top:279px;width:1px;height:201px;background:linear-gradient(#c4c4c4,#dedede 55%,#f4f4f4)"></div>
<div class="ab" style="left:368px;top:279px;width:1px;height:201px;background:linear-gradient(#c4c4c4,#dedede 55%,#f4f4f4)"></div>
<div class="ab" style="left:432px;top:279px;width:1px;height:201px;background:linear-gradient(#c4c4c4,#dedede 55%,#f4f4f4)"></div>
<div class="ab" style="left:499px;top:279px;width:1px;height:201px;background:linear-gradient(#c4c4c4,#dedede 55%,#f4f4f4)"></div>
<div class="ab" style="left:562px;top:279px;width:1px;height:201px;background:linear-gradient(#c4c4c4,#dedede 55%,#f4f4f4)"></div>
<div class="ab" style="left:712px;top:279px;width:1px;height:201px;background:linear-gradient(#c4c4c4,#dedede 55%,#f4f4f4)"></div>
<div class="ab" style="left:834px;top:279px;width:1px;height:201px;background:linear-gradient(#c4c4c4,#dedede 55%,#f4f4f4)"></div>
<div class="ab" style="left:944px;top:279px;width:1px;height:201px;background:linear-gradient(#c4c4c4,#dedede 55%,#f4f4f4)"></div>
<div class="ab" style="left:1073px;top:279px;width:1px;height:201px;background:linear-gradient(#c4c4c4,#dedede 55%,#f4f4f4)"></div>
<div class="ab" style="left:1121px;top:279px;width:1px;height:201px;background:linear-gradient(#c4c4c4,#dedede 55%,#f4f4f4)"></div>
<div class="ab" style="left:1249px;top:279px;width:1px;height:201px;background:linear-gradient(#c4c4c4,#dedede 55%,#f4f4f4)"></div>
<div class="ab" style="left:1321px;top:279px;width:1px;height:201px;background:linear-gradient(#c4c4c4,#dedede 55%,#f4f4f4)"></div>
<div class="ab" style="left:1388px;top:279px;width:1px;height:201px;background:linear-gradient(#c4c4c4,#dedede 55%,#f4f4f4)"></div>
<div class="ab" style="left:1444px;top:279px;width:1px;height:201px;background:linear-gradient(#c4c4c4,#dedede 55%,#f4f4f4)"></div>
<div class="ab" style="left:1511px;top:279px;width:1px;height:201px;background:linear-gradient(#c4c4c4,#dedede 55%,#f4f4f4)"></div>
<div class="ab" style="left:24px;top:279px;width:1px;height:201px;background:linear-gradient(#000,#9a9a9a 55%,#e4e4e4)"></div>
<div style="position:absolute;left:12px;top:480px;width:1538px;height:1px;background:#000"></div>
<div class="hb" style="left:12px;top:481px;width:13px;height:22px"></div>
<div style="position:absolute;left:48px;top:481px;width:1px;height:21px;background:#c6c6c6"></div>
<div style="position:absolute;left:95px;top:481px;width:1px;height:21px;background:#c6c6c6"></div>
<div style="position:absolute;left:234px;top:481px;width:1px;height:21px;background:#c6c6c6"></div>
<div style="position:absolute;left:306px;top:481px;width:1px;height:21px;background:#c6c6c6"></div>
<div style="position:absolute;left:368px;top:481px;width:1px;height:21px;background:#c6c6c6"></div>
<div style="position:absolute;left:432px;top:481px;width:1px;height:21px;background:#c6c6c6"></div>
<div style="position:absolute;left:499px;top:481px;width:1px;height:21px;background:#c6c6c6"></div>
<div style="position:absolute;left:562px;top:481px;width:1px;height:21px;background:#c6c6c6"></div>
<div style="position:absolute;left:712px;top:481px;width:1px;height:21px;background:#c6c6c6"></div>
<div style="position:absolute;left:834px;top:481px;width:1px;height:21px;background:#c6c6c6"></div>
<div style="position:absolute;left:944px;top:481px;width:1px;height:21px;background:#c6c6c6"></div>
<div style="position:absolute;left:1073px;top:481px;width:1px;height:21px;background:#c6c6c6"></div>
<div style="position:absolute;left:1121px;top:481px;width:1px;height:21px;background:#c6c6c6"></div>
<div style="position:absolute;left:1249px;top:481px;width:1px;height:21px;background:#c6c6c6"></div>
<div style="position:absolute;left:1321px;top:481px;width:1px;height:21px;background:#c6c6c6"></div>
<div style="position:absolute;left:1388px;top:481px;width:1px;height:21px;background:#c6c6c6"></div>
<div style="position:absolute;left:1444px;top:481px;width:1px;height:21px;background:#c6c6c6"></div>
<div style="position:absolute;left:1511px;top:481px;width:1px;height:21px;background:#c6c6c6"></div>
<div style="position:absolute;left:25px;top:502px;width:1525px;height:1px;background:#c0c0c0"></div>
<div class="cell" style="left:49px;top:481px;width:46px;height:21px;line-height:21px;text-align:right;padding-right:3px;color:#383838"><span class="n r">4</span></div>
<div class="cell" style="left:945px;top:481px;width:128px;height:21px;line-height:21px;text-align:right;padding-right:3px;color:#383838"><span class="n r">31 119,00</span></div>
<div class="cell" style="left:1074px;top:481px;width:47px;height:21px;line-height:21px;text-align:right;padding-right:3px;color:#383838"><span class="n r">16,13</span></div>
<div class="cell" style="left:1122px;top:481px;width:127px;height:21px;line-height:21px;text-align:right;padding-right:3px;color:#383838"><span class="n r">137 334 560,00</span></div>
<div class="cell" style="left:1512px;top:481px;width:61px;height:21px;line-height:21px;text-align:right;padding-right:3px;color:#383838"><span class="n r">0,00</span></div>
<div style="position:absolute;left:11px;top:503px;width:1539px;height:7px;background:#efefef"></div>
<div style="position:absolute;left:11px;top:503px;width:1539px;height:1px;background:#f8f8f8"></div>
<div style="position:absolute;left:11px;top:504px;width:1539px;height:1px;background:#ffffff"></div>
<div style="position:absolute;left:11px;top:509px;width:1539px;height:1px;background:#b8b8b8"></div>
<div style="position:absolute;left:11px;top:510px;width:1539px;height:1px;background:#5c5c5c"></div>
<div style="position:absolute;left:11px;top:509px;width:1px;height:253px;background:#a0a0a0"></div>
<div class="hb" style="left:12px;top:511px;width:13px;height:70px"></div>
<div class="hb" style="left:25px;top:511px;width:59px;height:70px"></div><div class="cell" style="left:25px;top:511px;width:58px;height:69px;line-height:69px;display:flex;justify-content:center;color:#383838"><span class="h c">ИД</span></div>
<div class="hb" style="left:84px;top:511px;width:330px;height:70px"></div><div class="cell" style="left:84px;top:511px;width:329px;height:69px;line-height:69px;display:flex;justify-content:center;color:#383838"><span class="h c">Наименование</span></div>
<div class="hb" style="left:414px;top:511px;width:106px;height:70px"></div><div class="cell" style="left:414px;top:511px;width:105px;height:69px;line-height:69px;display:flex;justify-content:center;color:#383838"><span class="h c">Серия</span></div>
<div class="hb" style="left:520px;top:511px;width:82px;height:70px"></div><div class="cell" style="left:520px;top:511px;width:81px;height:69px;line-height:69px;display:flex;justify-content:center;color:#383838"><span class="h c">Срок год.</span></div>
<div class="hb" style="left:602px;top:511px;width:109px;height:70px"></div><div class="cell" style="left:602px;top:511px;width:108px;height:69px;line-height:69px;display:flex;justify-content:center;color:#383838"><span class="h c">Кол-во</span></div>
<div class="hb" style="left:711px;top:511px;width:557px;height:43px"></div><div class="cell" style="left:711px;top:511px;width:556px;height:42px;line-height:42px;display:flex;justify-content:center;color:#383838"><span class="h c">Приходная</span></div>
<div class="hb" style="left:711px;top:554px;width:162px;height:27px"></div><div class="cell" style="left:711px;top:554px;width:161px;height:26px;line-height:26px;display:flex;justify-content:center;color:#383838"><span class="h c">Цена</span></div>
<div class="hb" style="left:873px;top:554px;width:116px;height:27px"></div><div class="cell" style="left:873px;top:554px;width:115px;height:26px;line-height:26px;display:flex;justify-content:center;color:#383838"><span class="h c">Цена с НДС</span></div>
<div class="hb" style="left:989px;top:554px;width:156px;height:27px"></div><div class="cell" style="left:989px;top:554px;width:155px;height:26px;line-height:26px;display:flex;justify-content:center;color:#383838"><span class="h c">Сумма</span></div>
<div class="hb" style="left:1145px;top:554px;width:123px;height:27px"></div><div class="cell" style="left:1145px;top:554px;width:122px;height:26px;line-height:26px;display:flex;justify-content:center;color:#383838"><span class="h c">Сумма НДС</span></div>
<div class="hb" style="left:1268px;top:511px;width:247px;height:43px"></div><div class="cell" style="left:1268px;top:511px;width:246px;height:42px;line-height:42px;display:flex;justify-content:center;color:#383838"><span class="h c">Со скидкой</span></div>
<div class="hb" style="left:1268px;top:554px;width:99px;height:27px"></div><div class="cell" style="left:1268px;top:554px;width:98px;height:26px;line-height:26px;display:flex;justify-content:center;color:#383838"><span class="h c">Цена</span></div>
<div class="hb" style="left:1367px;top:554px;width:148px;height:27px"></div><div class="cell" style="left:1367px;top:554px;width:147px;height:26px;line-height:26px;display:flex;justify-content:center;color:#383838"><span class="h c">Сумма</span></div>
<div class="hb" style="left:1515px;top:511px;width:136px;height:70px"></div>
<div class="cell" style="left:1515px;top:511px;width:200px;height:69px;line-height:69px;text-align:left;padding-left:1px;color:#383838"><span class="h l">Наценка</span></div>
<svg style="position:absolute;left:15px;top:544px" width="8" height="5" viewBox="0 0 8 5"><path d="M0 0 H8 L4 4.5Z" fill="#000"/></svg>
<div style="position:absolute;left:25px;top:581px;width:1525px;height:21px;background:#d9d9a9"></div>
<div class="hb" style="left:12px;top:581px;width:13px;height:22px"></div>
<div style="position:absolute;left:25px;top:581px;width:58px;height:21px;background:#a0a0a0"></div>
<div class="cell" style="left:25px;top:581px;width:58px;height:21px;line-height:21px;text-align:right;padding-right:3px;color:#fff"><span class="n r">29670</span></div>
<div class="cell" style="left:84px;top:581px;width:329px;height:21px;line-height:21px;text-align:left;padding-left:2px;"><span class="t l">АВТОРИЯ ТАБ 25МГ №30\PSYCHOTROPICS INDIA</span></div>
<div class="cell" style="left:414px;top:581px;width:105px;height:21px;line-height:21px;text-align:left;padding-left:2px;"><span class="t l">ABA44013</span></div>
<div class="cell" style="left:520px;top:581px;width:81px;height:21px;line-height:21px;text-align:left;padding-left:2px;"><span class="n l">01.12.2027</span></div>
<div class="cell" style="left:602px;top:581px;width:108px;height:21px;line-height:21px;text-align:right;padding-right:3px;"><span class="n r">5</span></div>
<div class="cell" style="left:711px;top:581px;width:161px;height:21px;line-height:21px;text-align:right;padding-right:3px;"><span class="n r">55 099,00</span></div>
<div class="cell" style="left:873px;top:581px;width:115px;height:21px;line-height:21px;text-align:right;padding-right:3px;"><span class="n r">61 710,88</span></div>
<div class="cell" style="left:989px;top:581px;width:155px;height:21px;line-height:21px;text-align:right;padding-right:3px;"><span class="n r">308 554,40</span></div>
<div class="cell" style="left:1145px;top:581px;width:122px;height:21px;line-height:21px;text-align:right;padding-right:3px;"><span class="n r">33 059,40</span></div>
<div class="cell" style="left:1268px;top:581px;width:98px;height:21px;line-height:21px;text-align:right;padding-right:3px;"><span class="n r">61 710,88</span></div>
<div class="cell" style="left:1367px;top:581px;width:147px;height:21px;line-height:21px;text-align:right;padding-right:3px;"><span class="n r">308 554,40</span></div>
<div class="cell" style="left:1515px;top:581px;width:135px;height:21px;line-height:21px;text-align:left;padding-left:2px;"><span class="t l">Приходная</span></div>
<div style="position:absolute;left:25px;top:603px;width:1525px;height:21px;background:#ffff00"></div>
<div class="hb" style="left:12px;top:603px;width:13px;height:22px"></div>
<div class="cell" style="left:25px;top:603px;width:58px;height:21px;line-height:21px;text-align:right;padding-right:3px;"><span class="n r">29437</span></div>
<div class="cell" style="left:84px;top:603px;width:329px;height:21px;line-height:21px;text-align:left;padding-left:2px;"><span class="t l">АДАПТОЛ КАПС 300МГ №20\ОЛАЙН ФАРМ, ЛАТВИЯ</span></div>
<div class="cell" style="left:414px;top:603px;width:105px;height:21px;line-height:21px;text-align:left;padding-left:2px;"><span class="t l">80224</span></div>
<div class="cell" style="left:520px;top:603px;width:81px;height:21px;line-height:21px;text-align:left;padding-left:2px;"><span class="n l">01.02.2027</span></div>
<div class="cell" style="left:602px;top:603px;width:108px;height:21px;line-height:21px;text-align:right;padding-right:3px;"><span class="n r">2</span></div>
<div class="cell" style="left:711px;top:603px;width:161px;height:21px;line-height:21px;text-align:right;padding-right:3px;"><span class="n r">78 681,00</span></div>
<div class="cell" style="left:873px;top:603px;width:115px;height:21px;line-height:21px;text-align:right;padding-right:3px;"><span class="n r">88 122,72</span></div>
<div class="cell" style="left:989px;top:603px;width:155px;height:21px;line-height:21px;text-align:right;padding-right:3px;"><span class="n r">176 245,44</span></div>
<div class="cell" style="left:1145px;top:603px;width:122px;height:21px;line-height:21px;text-align:right;padding-right:3px;"><span class="n r">18 883,44</span></div>
<div class="cell" style="left:1268px;top:603px;width:98px;height:21px;line-height:21px;text-align:right;padding-right:3px;"><span class="n r">88 122,72</span></div>
<div class="cell" style="left:1367px;top:603px;width:147px;height:21px;line-height:21px;text-align:right;padding-right:3px;"><span class="n r">176 245,44</span></div>
<div class="cell" style="left:1515px;top:603px;width:135px;height:21px;line-height:21px;text-align:left;padding-left:2px;"><span class="t l">Приходная</span></div>
<div style="position:absolute;left:25px;top:625px;width:1525px;height:21px;background:#ffff00"></div>
<div class="hb" style="left:12px;top:625px;width:13px;height:22px"></div>
<div class="cell" style="left:25px;top:625px;width:58px;height:21px;line-height:21px;text-align:right;padding-right:3px;"><span class="n r">29436</span></div>
<div class="cell" style="left:84px;top:625px;width:329px;height:21px;line-height:21px;text-align:left;padding-left:2px;"><span class="t l">АДАПТОЛ ТАБ 500МГ №20\ОЛАЙН ФАРМ, ЛАТВИЯ</span></div>
<div class="cell" style="left:414px;top:625px;width:105px;height:21px;line-height:21px;text-align:left;padding-left:2px;"><span class="t l">821123</span></div>
<div class="cell" style="left:520px;top:625px;width:81px;height:21px;line-height:21px;text-align:left;padding-left:2px;"><span class="n l">01.11.2027</span></div>
<div class="cell" style="left:602px;top:625px;width:108px;height:21px;line-height:21px;text-align:right;padding-right:3px;"><span class="n r">2</span></div>
<div class="cell" style="left:711px;top:625px;width:161px;height:21px;line-height:21px;text-align:right;padding-right:3px;"><span class="n r">103 561,00</span></div>
<div class="cell" style="left:873px;top:625px;width:115px;height:21px;line-height:21px;text-align:right;padding-right:3px;"><span class="n r">115 988,32</span></div>
<div class="cell" style="left:989px;top:625px;width:155px;height:21px;line-height:21px;text-align:right;padding-right:3px;"><span class="n r">231 976,64</span></div>
<div class="cell" style="left:1145px;top:625px;width:122px;height:21px;line-height:21px;text-align:right;padding-right:3px;"><span class="n r">24 854,64</span></div>
<div class="cell" style="left:1268px;top:625px;width:98px;height:21px;line-height:21px;text-align:right;padding-right:3px;"><span class="n r">115 988,32</span></div>
<div class="cell" style="left:1367px;top:625px;width:147px;height:21px;line-height:21px;text-align:right;padding-right:3px;"><span class="n r">231 976,64</span></div>
<div class="cell" style="left:1515px;top:625px;width:135px;height:21px;line-height:21px;text-align:left;padding-left:2px;"><span class="t l">Приходная</span></div>
<div style="position:absolute;left:25px;top:647px;width:1525px;height:20px;background:#ffff00"></div>
<div class="hb" style="left:12px;top:647px;width:13px;height:21px"></div>
<div class="cell" style="left:25px;top:647px;width:58px;height:20px;line-height:20px;text-align:right;padding-right:3px;"><span class="n r">29485</span></div>
<div class="cell" style="left:84px;top:647px;width:329px;height:20px;line-height:20px;text-align:left;padding-left:2px;"><span class="t l">АЗАРГА ГЛ/КАПЛИ 5МЛ\АЛКОН-КУВРЕР, БЕЛЬГИЯ</span></div>
<div class="cell" style="left:414px;top:647px;width:105px;height:20px;line-height:20px;text-align:left;padding-left:2px;"><span class="t l">VHV74E</span></div>
<div class="cell" style="left:520px;top:647px;width:81px;height:20px;line-height:20px;text-align:left;padding-left:2px;"><span class="n l">01.05.2026</span></div>
<div class="cell" style="left:602px;top:647px;width:108px;height:20px;line-height:20px;text-align:right;padding-right:3px;"><span class="n r">3</span></div>
<div class="cell" style="left:711px;top:647px;width:161px;height:20px;line-height:20px;text-align:right;padding-right:3px;"><span class="n r">125 243,00</span></div>
<div class="cell" style="left:873px;top:647px;width:115px;height:20px;line-height:20px;text-align:right;padding-right:3px;"><span class="n r">140 272,16</span></div>
<div class="cell" style="left:989px;top:647px;width:155px;height:20px;line-height:20px;text-align:right;padding-right:3px;"><span class="n r">420 816,48</span></div>
<div class="cell" style="left:1145px;top:647px;width:122px;height:20px;line-height:20px;text-align:right;padding-right:3px;"><span class="n r">45 087,48</span></div>
<div class="cell" style="left:1268px;top:647px;width:98px;height:20px;line-height:20px;text-align:right;padding-right:3px;"><span class="n r">140 272,16</span></div>
<div class="cell" style="left:1367px;top:647px;width:147px;height:20px;line-height:20px;text-align:right;padding-right:3px;"><span class="n r">420 816,48</span></div>
<div class="cell" style="left:1515px;top:647px;width:135px;height:20px;line-height:20px;text-align:left;padding-left:2px;"><span class="t l">Приходная</span></div>
<div style="position:absolute;left:25px;top:668px;width:1525px;height:21px;background:#ffff00"></div>
<div class="hb" style="left:12px;top:668px;width:13px;height:22px"></div>
<div class="cell" style="left:25px;top:668px;width:58px;height:21px;line-height:21px;text-align:right;padding-right:3px;"><span class="n r">29570</span></div>
<div class="cell" style="left:84px;top:668px;width:329px;height:21px;line-height:21px;text-align:left;padding-left:2px;"><span class="t l">АЗИБИОТ ТАБ 500МГ №3\КРКА, СЛОВЕНИЯ</span></div>
<div class="cell" style="left:414px;top:668px;width:105px;height:21px;line-height:21px;text-align:left;padding-left:2px;"><span class="t l">SM5323</span></div>
<div class="cell" style="left:520px;top:668px;width:81px;height:21px;line-height:21px;text-align:left;padding-left:2px;"><span class="n l">01.10.2028</span></div>
<div class="cell" style="left:602px;top:668px;width:108px;height:21px;line-height:21px;text-align:right;padding-right:3px;"><span class="n r">5</span></div>
<div class="cell" style="left:711px;top:668px;width:161px;height:21px;line-height:21px;text-align:right;padding-right:3px;"><span class="n r">35 981,00</span></div>
<div class="cell" style="left:873px;top:668px;width:115px;height:21px;line-height:21px;text-align:right;padding-right:3px;"><span class="n r">40 298,72</span></div>
<div class="cell" style="left:989px;top:668px;width:155px;height:21px;line-height:21px;text-align:right;padding-right:3px;"><span class="n r">201 493,60</span></div>
<div class="cell" style="left:1145px;top:668px;width:122px;height:21px;line-height:21px;text-align:right;padding-right:3px;"><span class="n r">21 588,60</span></div>
<div class="cell" style="left:1268px;top:668px;width:98px;height:21px;line-height:21px;text-align:right;padding-right:3px;"><span class="n r">40 298,72</span></div>
<div class="cell" style="left:1367px;top:668px;width:147px;height:21px;line-height:21px;text-align:right;padding-right:3px;"><span class="n r">201 493,60</span></div>
<div class="cell" style="left:1515px;top:668px;width:135px;height:21px;line-height:21px;text-align:left;padding-left:2px;"><span class="t l">Приходная</span></div>
<div style="position:absolute;left:25px;top:690px;width:1525px;height:21px;background:#ffff00"></div>
<div class="hb" style="left:12px;top:690px;width:13px;height:22px"></div>
<div class="cell" style="left:25px;top:690px;width:58px;height:21px;line-height:21px;text-align:right;padding-right:3px;"><span class="n r">29455</span></div>
<div class="cell" style="left:84px;top:690px;width:329px;height:21px;line-height:21px;text-align:left;padding-left:2px;"><span class="t l">АЗИМАК КАПС 250МГ №6\GMP, ГРУЗИЯ</span></div>
<div class="cell" style="left:414px;top:690px;width:105px;height:21px;line-height:21px;text-align:left;padding-left:2px;"><span class="t l">89050724</span></div>
<div class="cell" style="left:520px;top:690px;width:81px;height:21px;line-height:21px;text-align:left;padding-left:2px;"><span class="n l">01.07.2027</span></div>
<div class="cell" style="left:602px;top:690px;width:108px;height:21px;line-height:21px;text-align:right;padding-right:3px;"><span class="n r">15</span></div>
<div class="cell" style="left:711px;top:690px;width:161px;height:21px;line-height:21px;text-align:right;padding-right:3px;"><span class="n r">44 188,00</span></div>
<div class="cell" style="left:873px;top:690px;width:115px;height:21px;line-height:21px;text-align:right;padding-right:3px;"><span class="n r">49 490,56</span></div>
<div class="cell" style="left:989px;top:690px;width:155px;height:21px;line-height:21px;text-align:right;padding-right:3px;"><span class="n r">742 358,40</span></div>
<div class="cell" style="left:1145px;top:690px;width:122px;height:21px;line-height:21px;text-align:right;padding-right:3px;"><span class="n r">79 538,40</span></div>
<div class="cell" style="left:1268px;top:690px;width:98px;height:21px;line-height:21px;text-align:right;padding-right:3px;"><span class="n r">49 490,56</span></div>
<div class="cell" style="left:1367px;top:690px;width:147px;height:21px;line-height:21px;text-align:right;padding-right:3px;"><span class="n r">742 358,40</span></div>
<div class="cell" style="left:1515px;top:690px;width:135px;height:21px;line-height:21px;text-align:left;padding-left:2px;"><span class="t l">Приходная</span></div>
<div style="position:absolute;left:25px;top:712px;width:1525px;height:21px;background:#ffff00"></div>
<div class="hb" style="left:12px;top:712px;width:13px;height:22px"></div>
<div class="cell" style="left:25px;top:712px;width:58px;height:21px;line-height:21px;text-align:right;padding-right:3px;"><span class="n r">29456</span></div>
<div class="cell" style="left:84px;top:712px;width:329px;height:21px;line-height:21px;text-align:left;padding-left:2px;"><span class="t l">АЗИМАК КАПС 500МГ №3\GMP, ГРУЗИЯ</span></div>
<div class="cell" style="left:414px;top:712px;width:105px;height:21px;line-height:21px;text-align:left;padding-left:2px;"><span class="t l">90231024</span></div>
<div class="cell" style="left:520px;top:712px;width:81px;height:21px;line-height:21px;text-align:left;padding-left:2px;"><span class="n l">01.10.2027</span></div>
<div class="cell" style="left:602px;top:712px;width:108px;height:21px;line-height:21px;text-align:right;padding-right:3px;"><span class="n r">24</span></div>
<div class="cell" style="left:711px;top:712px;width:161px;height:21px;line-height:21px;text-align:right;padding-right:3px;"><span class="n r">44 188,00</span></div>
<div class="cell" style="left:873px;top:712px;width:115px;height:21px;line-height:21px;text-align:right;padding-right:3px;"><span class="n r">49 490,56</span></div>
<div class="cell" style="left:989px;top:712px;width:155px;height:21px;line-height:21px;text-align:right;padding-right:3px;"><span class="n r">1 187 773,44</span></div>
<div class="cell" style="left:1145px;top:712px;width:122px;height:21px;line-height:21px;text-align:right;padding-right:3px;"><span class="n r">127 261,44</span></div>
<div class="cell" style="left:1268px;top:712px;width:98px;height:21px;line-height:21px;text-align:right;padding-right:3px;"><span class="n r">49 490,56</span></div>
<div class="cell" style="left:1367px;top:712px;width:147px;height:21px;line-height:21px;text-align:right;padding-right:3px;"><span class="n r">1 187 773,44</span></div>
<div class="cell" style="left:1515px;top:712px;width:135px;height:21px;line-height:21px;text-align:left;padding-left:2px;"><span class="t l">Приходная</span></div>
<div style="position:absolute;left:25px;top:734px;width:1525px;height:21px;background:#ffff00"></div>
<div class="hb" style="left:12px;top:734px;width:13px;height:22px"></div>
<div class="cell" style="left:25px;top:734px;width:58px;height:21px;line-height:21px;text-align:right;padding-right:3px;"><span class="n r">29544</span></div>
<div class="cell" style="left:84px;top:734px;width:329px;height:21px;line-height:21px;text-align:left;padding-left:2px;"><span class="t l">АЗИМЕД КАПС 250МГ №6\АРТЕРИУМ, УКРАИНА</span></div>
<div class="cell" style="left:414px;top:734px;width:105px;height:21px;line-height:21px;text-align:left;padding-left:2px;"><span class="t l">99974</span></div>
<div class="cell" style="left:520px;top:734px;width:81px;height:21px;line-height:21px;text-align:left;padding-left:2px;"><span class="n l">01.06.2027</span></div>
<div class="cell" style="left:602px;top:734px;width:108px;height:21px;line-height:21px;text-align:right;padding-right:3px;"><span class="n r">15</span></div>
<div class="cell" style="left:711px;top:734px;width:161px;height:21px;line-height:21px;text-align:right;padding-right:3px;"><span class="n r">37 294,00</span></div>
<div class="cell" style="left:873px;top:734px;width:115px;height:21px;line-height:21px;text-align:right;padding-right:3px;"><span class="n r">41 769,28</span></div>
<div class="cell" style="left:989px;top:734px;width:155px;height:21px;line-height:21px;text-align:right;padding-right:3px;"><span class="n r">626 539,20</span></div>
<div class="cell" style="left:1145px;top:734px;width:122px;height:21px;line-height:21px;text-align:right;padding-right:3px;"><span class="n r">67 129,20</span></div>
<div class="cell" style="left:1268px;top:734px;width:98px;height:21px;line-height:21px;text-align:right;padding-right:3px;"><span class="n r">41 769,28</span></div>
<div class="cell" style="left:1367px;top:734px;width:147px;height:21px;line-height:21px;text-align:right;padding-right:3px;"><span class="n r">626 539,20</span></div>
<div class="cell" style="left:1515px;top:734px;width:135px;height:21px;line-height:21px;text-align:left;padding-left:2px;"><span class="t l">Приходная</span></div>
<div style="position:absolute;left:25px;top:756px;width:1525px;height:21px;background:#ffff00"></div>
<div class="hb" style="left:12px;top:756px;width:13px;height:22px"></div>
<div class="cell" style="left:25px;top:756px;width:58px;height:21px;line-height:21px;text-align:right;padding-right:3px;"><span class="n r">29638</span></div>
<div class="cell" style="left:84px;top:756px;width:329px;height:21px;line-height:21px;text-align:left;padding-left:2px;"><span class="t l">АЗИТРОКС САНДОЗ ТАБ 500МГ №3\САНДОЗ, ГЕРМАНИЯ</span></div>
<div class="cell" style="left:414px;top:756px;width:105px;height:21px;line-height:21px;text-align:left;padding-left:2px;"><span class="t l">1A1184459</span></div>
<div class="cell" style="left:520px;top:756px;width:81px;height:21px;line-height:21px;text-align:left;padding-left:2px;"><span class="n l">01.10.2027</span></div>
<div class="cell" style="left:602px;top:756px;width:108px;height:21px;line-height:21px;text-align:right;padding-right:3px;"><span class="n r">1</span></div>
<div class="cell" style="left:711px;top:756px;width:161px;height:21px;line-height:21px;text-align:right;padding-right:3px;"><span class="n r">15 340,00</span></div>
<div class="cell" style="left:873px;top:756px;width:115px;height:21px;line-height:21px;text-align:right;padding-right:3px;"><span class="n r">17 180,80</span></div>
<div class="cell" style="left:989px;top:756px;width:155px;height:21px;line-height:21px;text-align:right;padding-right:3px;"><span class="n r">17 180,80</span></div>
<div class="cell" style="left:1145px;top:756px;width:122px;height:21px;line-height:21px;text-align:right;padding-right:3px;"><span class="n r">1 840,80</span></div>
<div class="cell" style="left:1268px;top:756px;width:98px;height:21px;line-height:21px;text-align:right;padding-right:3px;"><span class="n r">17 180,80</span></div>
<div class="cell" style="left:1367px;top:756px;width:147px;height:21px;line-height:21px;text-align:right;padding-right:3px;"><span class="n r">17 180,80</span></div>
<div class="cell" style="left:1515px;top:756px;width:135px;height:21px;line-height:21px;text-align:left;padding-left:2px;"><span class="t l">Приходная</span></div>
<svg style="position:absolute;left:15px;top:585px" width="7" height="12" viewBox="0 0 7 12"><path d="M0 0 L6.5 6 L0 12Z" fill="#000"/></svg>
<div style="position:absolute;left:25px;top:602px;width:1525px;height:1px;background:#c6c6c6"></div>
<div style="position:absolute;left:25px;top:624px;width:1525px;height:1px;background:#c6c6c6"></div>
<div style="position:absolute;left:25px;top:646px;width:1525px;height:1px;background:#c6c6c6"></div>
<div style="position:absolute;left:25px;top:667px;width:1525px;height:1px;background:#c6c6c6"></div>
<div style="position:absolute;left:25px;top:689px;width:1525px;height:1px;background:#c6c6c6"></div>
<div style="position:absolute;left:25px;top:711px;width:1525px;height:1px;background:#c6c6c6"></div>
<div style="position:absolute;left:25px;top:733px;width:1525px;height:1px;background:#c6c6c6"></div>
<div style="position:absolute;left:25px;top:755px;width:1525px;height:1px;background:#c6c6c6"></div>
<div style="position:absolute;left:83px;top:581px;width:1px;height:181px;background:#c6c6c6"></div>
<div style="position:absolute;left:413px;top:581px;width:1px;height:181px;background:#c6c6c6"></div>
<div style="position:absolute;left:519px;top:581px;width:1px;height:181px;background:#c6c6c6"></div>
<div style="position:absolute;left:601px;top:581px;width:1px;height:181px;background:#c6c6c6"></div>
<div style="position:absolute;left:710px;top:581px;width:1px;height:181px;background:#c6c6c6"></div>
<div style="position:absolute;left:872px;top:581px;width:1px;height:181px;background:#c6c6c6"></div>
<div style="position:absolute;left:988px;top:581px;width:1px;height:181px;background:#c6c6c6"></div>
<div style="position:absolute;left:1144px;top:581px;width:1px;height:181px;background:#c6c6c6"></div>
<div style="position:absolute;left:1267px;top:581px;width:1px;height:181px;background:#c6c6c6"></div>
<div style="position:absolute;left:1366px;top:581px;width:1px;height:181px;background:#c6c6c6"></div>
<div style="position:absolute;left:1514px;top:581px;width:1px;height:181px;background:#c6c6c6"></div>
<div style="position:absolute;left:24px;top:581px;width:1px;height:181px;background:#000"></div>
<div class="ab" style="left:700px;top:270px;width:312px;height:237px;background:#f2f2f2;box-sizing:border-box;border:1px solid #cccccc;box-shadow:2px 2px 1.5px rgba(0,0,0,.42)">
<div class="ab" style="left:2px;top:27px;width:306px;height:25px;background:#91c9f7"></div>
<div class="mi" style="top:3px">Новый</div>
<div class="ms" style="top:3px">Ins</div>
<div class="mi" style="top:28px">Редактировать</div>
<div class="ms" style="top:28px">Enter</div>
<div class="mi" style="top:53px">Регистрация</div>
<div class="ms" style="top:53px">F6</div>
<div class="mi" style="top:78px">Удаление</div>
<div class="ms" style="top:78px">Del</div>
<div class="mi" style="top:103px">Оплата</div>
<div class="ms" style="top:103px">F3</div>
<div class="mi" style="top:128px">Обновить</div>
<div class="ms" style="top:128px">F5</div>
<div class="mi" style="top:152px">Выгрузка в excell</div>
<div class="ms" style="top:152px">F12</div>
<div class="mi" style="top:184px">Добавить комментарий</div>
<div class="mi" style="top:209px">Протокол активации</div>
<div class="ab" style="left:34px;top:179px;width:274px;height:1px;background:#d7d7d7"></div>
</div>
</body></html>
